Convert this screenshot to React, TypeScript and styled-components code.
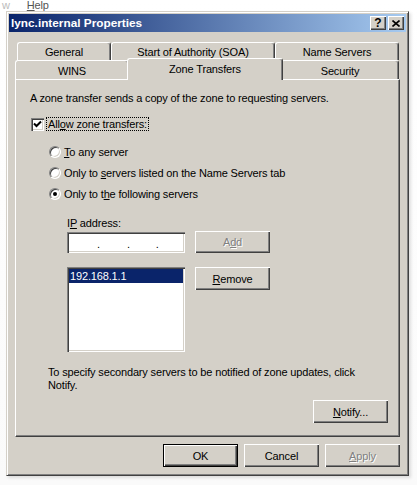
import React from 'react'
import styled, { createGlobalStyle } from 'styled-components'

const face = '#D4D0C8'
const shadow = '#808080'
const dark = '#404040'
const navy = '#0A246A'

const GlobalStyle = createGlobalStyle`
  html, body { margin: 0; padding: 0; background: #fff; }
  body {
    font-family: "Liberation Sans", Arial, sans-serif; font-size: 11px;
    letter-spacing: -0.15px; color: #000;
  }
  * { box-sizing: border-box; }
`

const Desktop = styled.div`
  width: 417px; height: 485px; overflow: hidden;
  display: flex; flex-direction: column;
  background: linear-gradient(#fff, #fafafa);
`

const MenuStrip = styled.div`
  height: 11px; display: flex; align-items: flex-end; gap: 17px;
  padding-left: 2px; overflow: hidden; line-height: 12px; color: #555;
  .ghost { color: #bbb; }
`

const Window = styled.div`
  margin-left: 6px; width: 403px; height: 465px;
  display: flex; flex-direction: column;
  background: ${face};
  border: 1px solid; border-color: ${face} ${dark} ${dark} ${face};
  box-shadow: inset 1px 1px #fff, inset -1px -1px ${shadow}, 2px 2px 3px rgba(0,0,0,0.12);
  padding: 2px;
`

const TitleBar = styled.div`
  height: 18px; display: flex; align-items: center;
  padding: 0 2px 0 2px;
  background: linear-gradient(to right, ${navy}, #A6CAF0);
  color: #fff; font-weight: bold; font-size: 11.8px; letter-spacing: 0;
`

const TitleText = styled.span` flex: 1; white-space: nowrap; `

const CaptionBtn = styled.div`
  width: 16px; height: 14px; margin-left: 2px;
  display: flex; align-items: center; justify-content: center;
  background: ${face}; color: #000; font-size: 12px; font-weight: bold;
  box-shadow: inset 1px 1px #fff, inset -1px -1px ${dark}, inset -2px -2px ${shadow};
`

const Body = styled.div`
  flex: 1; display: flex; flex-direction: column;
  padding: 10px 6px 0 6px;
`

const TabRow = styled.div<{ $h: number; $indent?: number }>`
  height: ${p => p.$h}px; display: flex; align-items: stretch;
  margin-left: ${p => p.$indent || 0}px;
`

const Tab = styled.div<{ $w: number; $active?: boolean }>`
  width: ${p => p.$w}px;
  display: flex; align-items: center; justify-content: center;
  background: ${face}; white-space: nowrap;
  border-top: 1px solid #fff; border-left: 1px solid #fff;
  border-right: 1px solid ${dark};
  border-radius: 3px 3px 0 0;
  box-shadow: inset -1px 0 ${shadow};
  padding-top: 1px;
  ${p => p.$active && `
    position: relative; z-index: 2;
    margin: -2px -2px -1px -2px; height: 22px;
    padding-top: 0; padding-bottom: 2px;
  `}
`

const Panel = styled.div`
  height: 358px; display: flex; flex-direction: column;
  border: 1px solid; border-color: #fff ${dark} ${dark} #fff;
  box-shadow: inset -1px -1px ${shadow};
  padding: 11px 0 0 14px;
`

const Line = styled.div<{ $mt?: number; $ml?: number }>`
  height: 14px; line-height: 14px; display: flex; align-items: center;
  margin-top: ${p => p.$mt || 0}px; margin-left: ${p => p.$ml || 0}px;
  white-space: pre;
`

const U = styled.span` text-decoration: underline; `

const CheckBox = styled.div`
  width: 13px; height: 13px; background: #fff;
  box-shadow: inset 1px 1px ${shadow}, inset 2px 2px ${dark}, inset -1px -1px #fff, inset -2px -2px ${face};
  display: flex; align-items: center; justify-content: center;
`

const FocusLabel = styled.span`
  margin-left: 3px; padding: 0 1px; line-height: 12px;
  outline: 1px dotted #000;
`

const RadioGroup = styled.div`
  margin-top: 10px; margin-left: 19px;
  display: flex; flex-direction: column;
`

const RadioRow = styled.div`
  height: 21px; display: flex; align-items: center; gap: 3px; white-space: nowrap;
`

const Radio = styled.div<{ $on?: boolean }>`
  width: 12px; height: 12px; border-radius: 50%; background: #fff;
  border: 1px solid; border-color: ${shadow} #fff #fff ${shadow};
  box-shadow: inset 1px 1px ${dark}, inset -1px -1px ${face};
  display: flex; align-items: center; justify-content: center;
  &::after {
    content: ''; width: 4px; height: 4px; border-radius: 50%;
    background: ${p => (p.$on ? '#000' : 'transparent')};
  }
`

const ControlRow = styled.div<{ $mt: number }>`
  display: flex; align-items: flex-start; gap: 10px;
  margin-top: ${p => p.$mt}px; margin-left: 37px;
`

const Sunken = styled.div<{ $w: number; $h: number; $mt?: number }>`
  width: ${p => p.$w}px; height: ${p => p.$h}px; margin-top: ${p => p.$mt || 0}px;
  background: #fff; padding: 2px;
  box-shadow: inset 1px 1px ${shadow}, inset 2px 2px ${dark}, inset -1px -1px #fff, inset -2px -2px ${face};
`

const IpBox = styled(Sunken)`
  display: flex; align-items: center;
  span { position: relative; top: 1px; }
  .d1 { margin-left: 28px; }
  .d2 { margin-left: 27px; }
  .d3 { margin-left: 26px; }
`

const ListItem = styled.div<{ $selected?: boolean }>`
  height: 14px; line-height: 14px; padding-left: 1px;
  background: ${p => (p.$selected ? navy : 'transparent')};
  color: ${p => (p.$selected ? '#fff' : '#000')};
`

const Button = styled.button<{ $h?: number; $default?: boolean }>`
  width: 75px; height: ${p => p.$h || 23}px; padding: 0;
  font: inherit; letter-spacing: inherit; color: #000; background: ${face};
  border: ${p => (p.$default ? '1px solid #000' : 'none')};
  box-shadow: inset 1px 1px #fff, inset -1px -1px ${dark}, inset -2px -2px ${shadow};
  display: flex; align-items: center; justify-content: center;
  &:disabled { color: ${shadow}; text-shadow: 1px 1px #fff; }
`

const NotifyText = styled.div`
  margin-top: 14px; margin-left: 18px; width: 330px;
  line-height: 13px;
`

const NotifyBtn = styled(Button)`
  align-self: flex-end; margin-top: 8px; margin-right: 11px;
`

const DialogButtons = styled.div`
  display: flex; justify-content: flex-end; gap: 6px;
  margin-top: 7px;
`

const CloseGlyph = () => (
  <svg width="8" height="7" viewBox="0 0 8 7">
    <path d="M0.5 0.5 L7.5 6.5 M7.5 0.5 L0.5 6.5" stroke="#000" strokeWidth="1.6" />
  </svg>
)

const CheckGlyph = () => (
  <svg width="9" height="9" viewBox="0 0 9 9">
    <path d="M1 3.5 L3.5 6 L8 1.5" stroke="#000" strokeWidth="2" fill="none" />
  </svg>
)

const App: React.FC = () => {
  return (
    <Desktop>
      <GlobalStyle />
      <MenuStrip>
        <span className='ghost'>w</span>
        <span><U>H</U>elp</span>
      </MenuStrip>
      <Window>
        <TitleBar>
          <TitleText>lync.internal Properties</TitleText>
          <CaptionBtn>?</CaptionBtn>
          <CaptionBtn><CloseGlyph /></CaptionBtn>
        </TitleBar>
        <Body>
          <TabRow $h={18} $indent={2}>
            <Tab $w={94}>General</Tab>
            <Tab $w={164}>Start of Authority (SOA)</Tab>
            <Tab $w={124}>Name Servers</Tab>
          </TabRow>
          <TabRow $h={19}>
            <Tab $w={114}>WINS</Tab>
            <Tab $w={156} $active>Zone Transfers</Tab>
            <Tab $w={118}>Security</Tab>
          </TabRow>
          <Panel>
            <Line>A zone transfer sends a copy of the zone to requesting servers.</Line>
            <Line $mt={12} $ml={1}>
              <CheckBox><CheckGlyph /></CheckBox>
              <FocusLabel>All<U>o</U>w zone transfers:</FocusLabel>
            </Line>
            <RadioGroup>
              <RadioRow><Radio /><span><U>T</U>o any server</span></RadioRow>
              <RadioRow><Radio /><span>Only to <U>s</U>ervers listed on the Name Servers tab</span></RadioRow>
              <RadioRow><Radio $on /><span>Only to t<U>h</U>e following servers</span></RadioRow>
            </RadioGroup>
            <Line $mt={12} $ml={37}><span>I<U>P</U> address:</span></Line>
            <ControlRow $mt={1}>
              <IpBox $w={118} $h={21} $mt={1}>
                <span className='d1'>.</span>
                <span className='d2'>.</span>
                <span className='d3'>.</span>
              </IpBox>
              <Button $h={22} disabled><span>A<U>d</U>d</span></Button>
            </ControlRow>
            <ControlRow $mt={14}>
              <Sunken $w={118} $h={85}>
                <ListItem $selected>192.168.1.1</ListItem>
              </Sunken>
              <Button><span><U>R</U>emove</span></Button>
            </ControlRow>
            <NotifyText>
              To specify secondary servers to be notified of zone updates, click Notify.
            </NotifyText>
            <NotifyBtn><span><U>N</U>otify...</span></NotifyBtn>
          </Panel>
          <DialogButtons>
            <Button $default>OK</Button>
            <Button>Cancel</Button>
            <Button disabled><span><U>A</U>pply</span></Button>
          </DialogButtons>
        </Body>
      </Window>
    </Desktop>
  )
}

export default App
